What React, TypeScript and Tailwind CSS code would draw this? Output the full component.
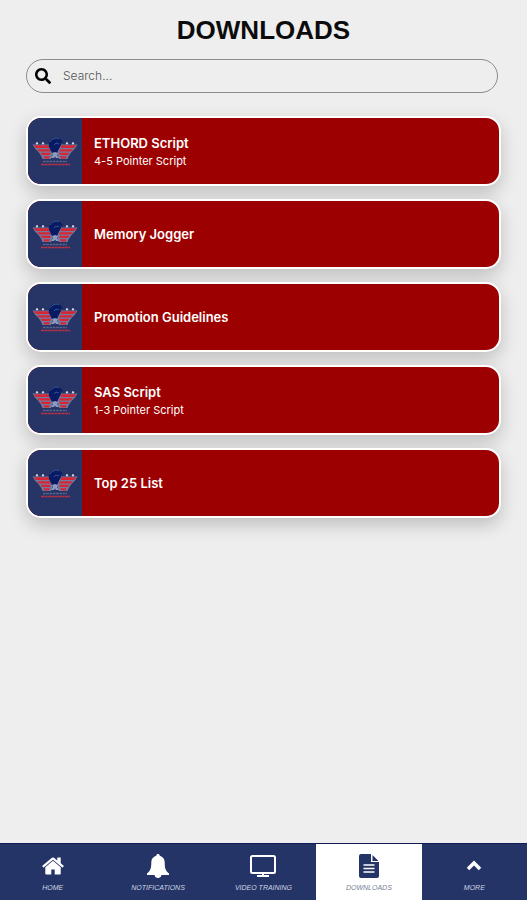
import React from "react";
import { FaSearch } from "react-icons/fa";

type Download = { title: string; note?: string };

const downloads: Download[] = [
  { title: "ETHORD Script", note: "4-5 Pointer Script" },
  { title: "Memory Jogger" },
  { title: "Promotion Guidelines" },
  { title: "SAS Script", note: "1-3 Pointer Script" },
  { title: "Top 25 List" },
];

function EagleLogo() {
  return (
    <svg viewBox="0 0 46 30" className="h-[30px] w-[46px]" aria-hidden="true">
      <path d="M0.500 8.500H17l4 8.500-2 6h-8.500L9 19.500 6.500 16 3 12.500zM45.500 8.500H29L25 17l2 6h8.500l1.500-3.500 2.500-3.500 3.500-3.500z" fill="#8b93b4" opacity="0.75" />
      <path d="M1.500 9.300h15l1 2.700H4zM5 13.200h13l1 2.300H7zM8.500 16.700H19l-1 2.300H10zM11.500 20.200h6.500l-1 2.300h-5z" fill="#d62636" />
      <path d="M44.500 9.300h-15l-1 2.700H42zM41 13.200H28l-1 2.300h12zM37.500 16.700H27l1 2.300h8zM34.500 20.200H28l1 2.300h5z" fill="#d62636" />
      <path d="M17 11c-1-5 2-9 7-9 4 0 6 2 7 5l-3-1 1 3-3 5-1 3h-5l-2-4z" fill="#061b63" />
      <path d="M18 6c2-3 6-5 9-3M22 9l2-2 3 1" fill="none" stroke="#5268a0" strokeWidth="0.7" />
      <path d="M20 17l3-1 3 1-1 2 2 3h-3l-1-1.500-1 1.500h-3l2-3z" fill="#8f9ac0" />
      <path d="M5 6l1 2H4zM11 6l1 2h-2zM35 6l1 2h-2zM41 6l1 2h-2z" fill="#e8ebf5" stroke="#e8ebf5" strokeWidth="0.5" />
      <path d="M11 25.500h24" stroke="#59668f" strokeWidth="1.500" strokeDasharray="2.500 0.800" />
      <path d="M9 28.500h29" stroke="#b83045" strokeWidth="1.400" strokeDasharray="3 0.400" />
    </svg>
  );
}

function HomeIcon() {
  return (
    <svg viewBox="0 0 1792 1792" className="size-6" fill="currentColor" aria-hidden="true">
      <path d="M1472 992v480q0 26-19 45t-45 19h-384v-384H768v384H384q-26 0-45-19t-19-45V992q0-1 .5-3t.5-3l575-474 575 474q1 2 1 6zm223-69l-62 74q-8 9-21 11h-3q-13 0-21-7L896 424l-692 577q-12 8-24 7-13-2-21-11l-62-74q-8-10-7-23.5t11-21.5l719-599q32-26 76-26t76 26l244 204V288q0-14 9-23t23-9h192q14 0 23 9t9 23v408l219 182q10 8 11 21.5t-7 23.5z" />
    </svg>
  );
}

function BellIcon() {
  return (
    <svg viewBox="0 0 24 26" className="h-[26px] w-6" fill="currentColor" aria-hidden="true">
      <path d="M12 1c-1 0-1.700.7-1.700 1.700C7 3.500 5.300 6 5.300 9.500c0 6-1 8.500-4.300 11V22h22v-1.500c-3.300-2.500-4.300-5-4.300-11 0-3.500-1.700-6-5-6.800C13.700 1.700 13 1 12 1zM8.500 21.500c.2 2.700 1.900 3.500 3.500 3.500s3.300-.8 3.500-3.500z" />
    </svg>
  );
}

function MonitorIcon() {
  return (
    <svg viewBox="0 0 28 24" className="h-6 w-7" fill="none" stroke="currentColor" strokeWidth="2" aria-hidden="true">
      <rect x="2" y="2" width="24" height="17" rx="1.500" />
      <path d="M8 22h12M14 19v3" strokeWidth="2" />
    </svg>
  );
}

function FileIcon() {
  return (
    <svg viewBox="0 0 22 24" className="h-6 w-[22px]" aria-hidden="true">
      <path fill="currentColor" d="M3 0h10v8h8v14q0 2-2 2H3q-2 0-2-2V2q0-2 2-2zM14.500 1L20.500 7h-6z" />
      <path d="M5.500 11h11M5.500 14.500h11M5.500 18h11" stroke="white" strokeWidth="1.500" />
    </svg>
  );
}

function ChevronIcon() {
  return (
    <svg viewBox="0 0 16 24" className="h-6 w-4" fill="none" stroke="currentColor" strokeWidth="3.500" aria-hidden="true">
      <path d="M2 15l6-6 6 6" />
    </svg>
  );
}

const tabs = [
  { label: "HOME", Icon: HomeIcon },
  { label: "NOTIFICATIONS", Icon: BellIcon },
  { label: "VIDEO TRAINING", Icon: MonitorIcon },
  { label: "DOWNLOADS", Icon: FileIcon, active: true },
  { label: "MORE", Icon: ChevronIcon },
];

export default function App() {
  return (
    <div className="flex min-h-screen flex-col bg-[#eeeeee] font-['Liberation_Sans',sans-serif]">
      <main className="flex-1 px-[26px] pt-3">
        <h1 className="text-center text-[26px] leading-9 font-bold text-[#0c0c0c]">DOWNLOADS</h1>
        <div className="mt-[11px] mr-[3px] flex h-[34px] items-center gap-3 rounded-full border border-[#8c8c8c] pl-2">
          <label htmlFor="search" aria-label="Search downloads">
            <FaSearch className="size-4 text-black" aria-hidden="true" />
          </label>
          <input
            id="search"
            type="search"
            placeholder="Search..."
            className="min-w-0 flex-1 bg-transparent font-[Inter,sans-serif] text-xs font-light text-black outline-none placeholder:text-[#555555]"
          />
        </div>
        <ul className="mt-[23px] flex flex-col gap-[13px]">
          {downloads.map((item) => (
            <li key={item.title}>
              <button
                type="button"
                className="flex h-[70px] w-full overflow-hidden rounded-[15px] border-2 border-white bg-[#9d0000] text-left shadow-[0_7px_18px_rgba(0,0,0,0.2)]"
              >
                <span className="flex h-full w-[54px] shrink-0 items-center justify-center bg-[#263565]">
                  <EagleLogo />
                </span>
                <span className="flex h-full flex-col justify-center pl-3 text-white">
                  <span className="font-[Inter,sans-serif] text-[13px] leading-5 font-semibold">{item.title}</span>
                  {item.note && (
                    <span className="font-[Inter,sans-serif] text-[11px] leading-4">{item.note}</span>
                  )}
                </span>
              </button>
            </li>
          ))}
        </ul>
      </main>
      <nav className="grid h-[57px] grid-cols-5 border-t border-[#101c58] bg-[#243467]">
        {tabs.map(({ label, Icon, active }) => (
          <a
            key={label}
            href={"#" + label.toLowerCase().replace(" ", "-")}
            aria-current={active ? "page" : undefined}
            className={
              active
                ? "flex flex-col items-center bg-white pt-2 text-[#243467]"
                : "flex flex-col items-center pt-2 text-white"
            }
          >
            <span className="flex h-7 items-center">
              <Icon />
            </span>
            <span className={active ? "text-[7px] leading-4 text-[#777f98] italic" : "text-[7px] leading-4 text-[#d0d5e4] italic"}>
              {label}
            </span>
          </a>
        ))}
      </nav>
    </div>
  );
}
